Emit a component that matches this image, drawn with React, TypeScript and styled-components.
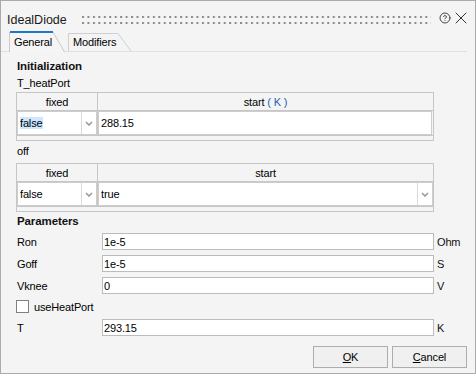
import styled, { createGlobalStyle } from "styled-components";
import { CircleHelp, X } from "lucide-react";

const GlobalStyle = createGlobalStyle`
  body {
    margin: 0;
    font-family: "Liberation Sans", Arial, sans-serif;
  }
`;

const Window = styled.div`
  width: 476px;
  height: 374px;
  box-sizing: border-box;
  border: 1px solid #ababab;
  background: #f4f4f4;
  display: flex;
  flex-direction: column;
  font-size: 11px;
  line-height: 14px;
  letter-spacing: -0.15px;
  color: #000;
  overflow: hidden;
`;

const TitleBar = styled.div`
  height: 30px;
  box-sizing: border-box;
  padding: 7px 4px 0 6px;
  display: flex;
  align-items: center;
`;

const Title = styled.div`
  font-size: 12.5px;
  letter-spacing: 0;
  color: #1a1a1a;
`;

const Grip = styled.svg`
  flex: 1;
  height: 8px;
  margin: 0 8px 0 15px;
`;

const TitleIcons = styled.div`
  display: flex;
  align-items: center;
  margin-bottom: 4px;
  color: #333;
`;

const TabStrip = styled.div`
  display: flex;
  align-items: flex-end;
  gap: 3px;
  height: 21px;
  box-sizing: border-box;
  padding-left: 8px;
  margin-right: 8px;
  border-bottom: 1px solid #e0e0e0;
`;

const Tab = styled.div<{ $active?: boolean; $w: number }>`
  position: relative;
  width: ${(p) => p.$w}px;
  height: ${(p) => (p.$active ? 21 : 18)}px;
  margin-bottom: ${(p) => (p.$active ? -1 : 0)}px;
  box-sizing: border-box;
  display: flex;
  align-items: flex-end;
  padding: 0 0 ${(p) => (p.$active ? 3 : 2)}px 5px;
`;

const TabShape = styled.svg`
  position: absolute;
  inset: 0;
  overflow: visible;
`;

const TabLabel = styled.span`
  position: relative;
`;

const Content = styled.div`
  flex: 1;
  display: flex;
  flex-direction: column;
  padding: 7px 8px 5px 15px;
`;

const Heading = styled.div<{ $top?: number }>`
  font-weight: bold;
  font-size: 11.5px;
  letter-spacing: -0.1px;
  padding-left: 1px;
  margin-top: ${(p) => p.$top ?? 0}px;
  color: #111;
`;

const Caption = styled.div<{ $top: number }>`
  padding-left: 1px;
  margin-top: ${(p) => p.$top}px;
`;

const Table = styled.div<{ $top: number }>`
  width: 418px;
  box-sizing: border-box;
  border: 1px solid #c6c6c6;
  padding-bottom: 4px;
  margin-top: ${(p) => p.$top}px;
`;

const HeaderRow = styled.div`
  display: grid;
  grid-template-columns: 81px 1fr;
  height: 18px;
  box-sizing: border-box;
  border-bottom: 1px solid #c6c6c6;
`;

const HeaderCell = styled.div`
  display: flex;
  justify-content: center;
  align-items: center;
  &:first-child {
    border-right: 1px solid #c6c6c6;
  }
`;

const Unit = styled.span`
  color: #1f5fb4;
  margin-left: 3px;
`;

const DataRow = styled.div`
  display: grid;
  grid-template-columns: 81px 1fr;
  height: 25px;
  box-sizing: border-box;
  border-bottom: 1px solid #c6c6c6;
`;

const DataCell = styled.div`
  display: flex;
  &:first-child {
    border-right: 1px solid #c6c6c6;
  }
`;

const Field = styled.div<{ $mr?: number }>`
  flex: 1;
  display: flex;
  align-items: center;
  box-sizing: border-box;
  border: 1px solid #cdcdcd;
  background: #fff;
  margin-right: ${(p) => p.$mr ?? 0}px;
`;

const FieldText = styled.div`
  flex: 1;
  padding-left: 2px;
`;

const Selected = styled.span`
  display: inline-block;
  line-height: 12px;
  background: #cce8ff;
`;

const Arrow = styled.div`
  width: 14px;
  align-self: stretch;
  border-left: 1px solid #dadada;
  display: flex;
  align-items: center;
  justify-content: center;
`;

const Params = styled.div`
  display: flex;
  flex-direction: column;
  gap: 5px;
  margin-top: 5px;
`;

const ParamRow = styled.div`
  display: grid;
  grid-template-columns: 85px 332px auto;
  align-items: center;
  height: 17px;
  padding-left: 1px;
`;

const ParamInput = styled.div`
  height: 17px;
  box-sizing: border-box;
  border: 1px solid #bcbcbc;
  background: #fff;
  padding-left: 1px;
  display: flex;
  align-items: center;
`;

const ParamUnit = styled.span`
  padding-left: 3px;
  color: #111;
`;

const CheckRow = styled.label`
  display: flex;
  align-items: center;
  gap: 5px;
  height: 15px;
`;

const CheckBox = styled.span`
  width: 13px;
  height: 13px;
  box-sizing: border-box;
  border: 1px solid #808080;
  background: #fff;
`;

const Buttons = styled.div`
  margin-top: auto;
  display: flex;
  justify-content: flex-end;
  gap: 4px;
`;

const Button = styled.button`
  width: 75px;
  height: 22px;
  box-sizing: border-box;
  border: 1px solid #adadad;
  background: #f0f0f0;
  font: inherit;
  letter-spacing: inherit;
  color: #000;
  padding: 0;
  u {
    text-decoration: underline;
  }
`;

const Chevron = () => (
  <svg width="8" height="5" viewBox="0 0 8 5">
    <path d="M1 1 L4 4 L7 1" fill="none" stroke="#9a9a9a" strokeWidth="1.6" />
  </svg>
);

const Combo = ({ value, selected }: { value: string; selected?: boolean }) => (
  <Field>
    <FieldText>{selected ? <Selected>{value}</Selected> : value}</FieldText>
    <Arrow>
      <Chevron />
    </Arrow>
  </Field>
);

const Param = ({ label, value, unit }: { label: string; value: string; unit?: string }) => (
  <ParamRow>
    <span>{label}</span>
    <ParamInput>{value}</ParamInput>
    <ParamUnit>{unit}</ParamUnit>
  </ParamRow>
);

export default function App() {
  return (
    <>
      <GlobalStyle />
      <Window>
        <TitleBar>
          <Title>IdealDiode</Title>
          <Grip>
            <defs>
              <pattern id="dots" width="5.45" height="6" patternUnits="userSpaceOnUse">
                <rect width="2" height="2" fill="#8a8a8a" />
              </pattern>
            </defs>
            <rect width="100%" height="8" fill="url(#dots)" />
          </Grip>
          <TitleIcons>
            <CircleHelp size={12} strokeWidth={1.8} />
            <X size={20} strokeWidth={1.2} />
          </TitleIcons>
        </TitleBar>

        <TabStrip>
          <Tab $active $w={56}>
            <TabShape width="56" height="21">
              <path d="M0 21 V0 H44 L55.5 21 Z" fill="#f5f5f5" />
              <path d="M0.5 21 V1 M44 1 L55.5 21" fill="none" stroke="#cacaca" />
              <rect x="1" y="0" width="43" height="2" fill="#1c78c8" />
            </TabShape>
            <TabLabel>General</TabLabel>
          </Tab>
          <Tab $w={64}>
            <TabShape width="64" height="18">
              <path d="M0.5 18 V0.5 H50 L63 18" fill="none" stroke="#cfcfcf" />
            </TabShape>
            <TabLabel>Modifiers</TabLabel>
          </Tab>
        </TabStrip>

        <Content>
          <Heading>Initialization</Heading>
          <Caption $top={3}>T_heatPort</Caption>
          <Table $top={2}>
            <HeaderRow>
              <HeaderCell>fixed</HeaderCell>
              <HeaderCell>
                start<Unit>( K )</Unit>
              </HeaderCell>
            </HeaderRow>
            <DataRow>
              <DataCell>
                <Combo value="false" selected />
              </DataCell>
              <DataCell>
                <Field $mr={1}>
                  <FieldText>288.15</FieldText>
                </Field>
              </DataCell>
            </DataRow>
          </Table>

          <Caption $top={3}>off</Caption>
          <Table $top={5}>
            <HeaderRow>
              <HeaderCell>fixed</HeaderCell>
              <HeaderCell>start</HeaderCell>
            </HeaderRow>
            <DataRow>
              <DataCell>
                <Combo value="false" />
              </DataCell>
              <DataCell>
                <Combo value="true" />
              </DataCell>
            </DataRow>
          </Table>

          <Heading $top={2}>Parameters</Heading>
          <Params>
            <Param label="Ron" value="1e-5" unit="Ohm" />
            <Param label="Goff" value="1e-5" unit="S" />
            <Param label="Vknee" value="0" unit="V" />
            <CheckRow>
              <CheckBox />
              useHeatPort
            </CheckRow>
            <Param label="T" value="293.15" unit="K" />
          </Params>

          <Buttons>
            <Button>
              <u>O</u>K
            </Button>
            <Button>
              <u>C</u>ancel
            </Button>
          </Buttons>
        </Content>
      </Window>
    </>
  );
}
